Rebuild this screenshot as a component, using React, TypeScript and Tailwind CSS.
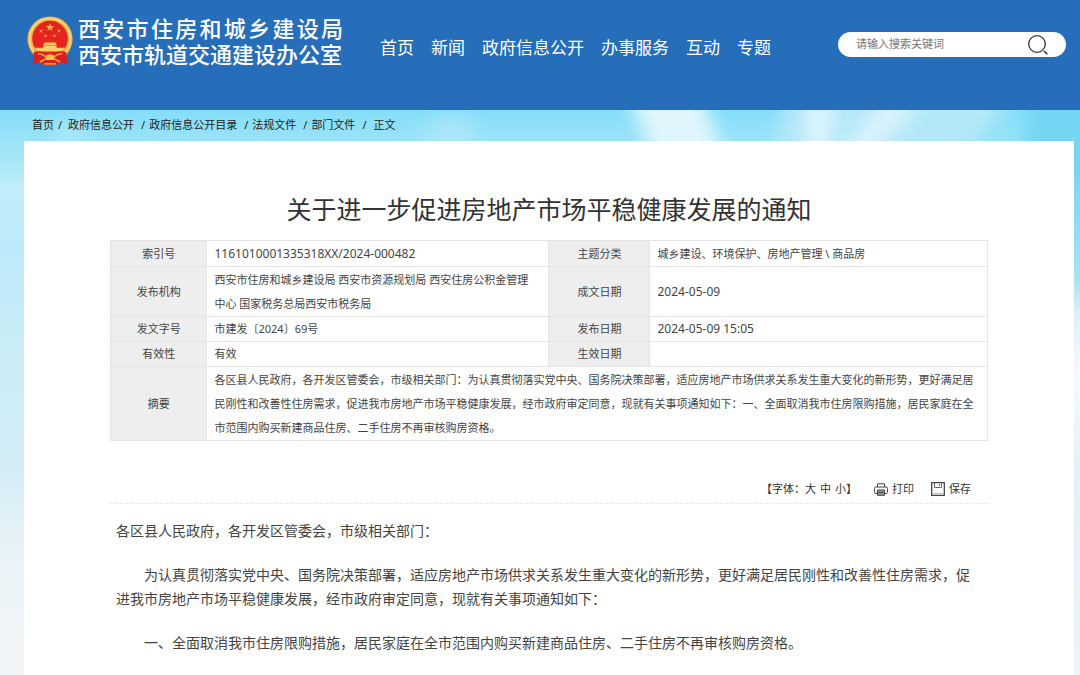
import React from 'react';

interface NoticeRow {
  label: string;
  value: string;
  numeric?: boolean;
  sideLabel: string;
  sideValue: string;
  sideNumeric?: boolean;
  height: string;
}

const navItems = ['首页', '新闻', '政府信息公开', '办事服务', '互动', '专题'];

const crumbs = ['首页', '政府信息公开', '政府信息公开目录', '法规文件', '部门文件'];

const rows: NoticeRow[] = [
  {
    label: '索引号',
    value: '1161010001335318XX/2024-000482',
    numeric: true,
    sideLabel: '主题分类',
    sideValue: '城乡建设、环境保护、房地产管理 \\ 商品房',
    height: 'h-[26px]',
  },
  {
    label: '发布机构',
    value: '西安市住房和城乡建设局 西安市资源规划局 西安住房公积金管理中心 国家税务总局西安市税务局',
    sideLabel: '成文日期',
    sideValue: '2024-05-09',
    sideNumeric: true,
    height: 'h-[50px]',
  },
  {
    label: '发文字号',
    value: '市建发〔2024〕69号',
    sideLabel: '发布日期',
    sideValue: '2024-05-09 15:05',
    sideNumeric: true,
    height: 'h-[25px]',
  },
  {
    label: '有效性',
    value: '有效',
    sideLabel: '生效日期',
    sideValue: '',
    height: 'h-[25px]',
  },
];

const STAR = 'M0-5 1.2-1.6 4.8-1.6 1.9.6 3 4 0 1.9-3 4-1.9.6-4.8-1.6-1.2-1.6Z';

const Emblem: React.FC = () => (
  <svg viewBox="0 0 46 50" className="h-[50px] w-[46px] shrink-0" aria-hidden="true">
    <circle cx="23" cy="23" r="22.6" fill="#f0b04a" />
    <circle cx="23" cy="23" r="20.4" fill="none" stroke="#fbd478" strokeWidth="2" />
    <circle cx="23" cy="22.5" r="17.8" fill="#e6231f" />
    <g fill="#f5a94a">
      <path d={STAR} transform="translate(23 11.5) scale(.9)" />
      <path d={STAR} transform="translate(14 15) scale(.42)" />
      <path d={STAR} transform="translate(32 15) scale(.42)" />
      <path d={STAR} transform="translate(18.5 19.8) scale(.42)" />
      <path d={STAR} transform="translate(27.5 19.8) scale(.42)" />
    </g>
    <g fill="#fbcd62">
      <path d="M17.5 26.5H28.5L30 29.5H16Z" />
      <path d="M16.5 29.8H29.5V31.8H38L35 35.5H11L8 31.8H16.5Z" />
    </g>
    <path d="M7 36Q14 34 18 37L23 39 28 37Q32 34 39 36L40.5 48 33 46.5 29 49H17L13 46.5 5.5 48Z" fill="#db1f1e" />
    <path d="M18 40Q23 36.5 28 40L27 44H19Z" fill="#f7c04a" />
    <g stroke="#f2a53d" strokeWidth="1.6" fill="none">
      <path d="M11 37.5Q16 38 19 41" />
      <path d="M35 37.5Q30 38 27 41" />
      <path d="M13 46 18.5 43" />
      <path d="M33 46 27.5 43" />
      <path d="M17 47.8H29" />
    </g>
  </svg>
);

const Sky: React.FC = () => (
  <svg
    viewBox="0 0 1080 565"
    preserveAspectRatio="none"
    className="absolute inset-0 h-full w-full"
    aria-hidden="true"
  >
    <defs>
      <linearGradient id="sky" x1="0" y1="0" x2="0" y2="1">
        <stop offset="0" stopColor="#85def8" />
        <stop offset=".06" stopColor="#9be4f8" />
        <stop offset=".14" stopColor="#c2edf9" />
        <stop offset=".25" stopColor="#bce9fa" />
        <stop offset=".42" stopColor="#c9edf6" />
        <stop offset=".62" stopColor="#d3ecf6" />
        <stop offset=".8" stopColor="#eaf3f8" />
        <stop offset="1" stopColor="#f2f5f7" />
      </linearGradient>
      <linearGradient id="skyRight" x1="0" y1="0" x2="0" y2="1">
        <stop offset="0" stopColor="#75d6f4" />
        <stop offset=".18" stopColor="#86dcf5" />
        <stop offset=".3" stopColor="#a6e4f6" />
        <stop offset=".36" stopColor="#daf1fa" />
        <stop offset=".47" stopColor="#f6fafc" />
        <stop offset=".64" stopColor="#e2f1f7" />
        <stop offset="1" stopColor="#eef3f6" />
      </linearGradient>
      <filter id="haze" x="-50%" y="-50%" width="200%" height="200%">
        <feGaussianBlur stdDeviation="9" />
      </filter>
    </defs>
    <rect width="1080" height="565" fill="url(#sky)" />
    <rect x="1060" width="20" height="565" fill="url(#skyRight)" />
    <g filter="url(#haze)">
      <path d="M790-20H1020L960 50H770Z" fill="#b4e8f8" />
      <path d="M625-20H700L725 50H655Z" fill="#e0f6fc" />
      <path d="M808-20H836L826 50H806Z" fill="#def5fc" />
      <path d="M890-20H930L870 50H835Z" fill="#d8f3fb" />
      <path d="M1035-20H1100V70H1010Z" fill="#75d6f4" />
      <path d="M430 10H470L480 40H420Z" fill="#abe7f8" />
      <path d="M60 15H90L80 40H50Z" fill="#a9e8f9" />
    </g>
  </svg>
);

const PrintIcon: React.FC = () => (
  <svg viewBox="0 0 14 13" className="h-[13px] w-[14px]" fill="none" stroke="#444" aria-hidden="true">
    <path d="M3.5 4V.8H10.5V4" />
    <path d="M3 10.5H1.8Q.6 10.5.6 9.3V5.2Q.6 4 1.8 4H12.2Q13.4 4 13.4 5.2V9.3Q13.4 10.5 12.2 10.5H11" />
    <path d="M3.5 7H10.5V12.3H3.5Z" fill="#999" />
    <path d="M4.5 9.5H9.5" />
  </svg>
);

const SaveIcon: React.FC = () => (
  <svg viewBox="0 0 14 14" className="h-[14px] w-[14px]" fill="none" stroke="#444" aria-hidden="true">
    <path d="M.7.7H13.3V13.3H.7Z" strokeWidth="1.3" />
    <path d="M3.5 1V5.5H10.5V1M8.5 2V4" stroke="#666" />
    <path d="M2.5 11.5H11.5" stroke="#bbb" />
  </svg>
);

const Header: React.FC = () => (
  <header className="flex h-[110px] items-start bg-[#266eb9] pr-[14px] pl-[27px] text-white">
    <div className="mt-[15px] flex items-center gap-[5px]">
      <Emblem />
      <div className="w-[265px] text-[22px] leading-[26px] font-medium whitespace-nowrap">
        <p className="[text-align-last:justify]">西安市住房和城乡建设局</p>
        <p>西安市轨道交通建设办公室</p>
      </div>
    </div>
    <nav className="mt-9 ml-[37px] flex gap-[17px] text-[17px] leading-6">
      {navItems.map(item => (
        <a key={item} href="#">{item}</a>
      ))}
    </nav>
    <form className="mt-8 ml-auto flex h-[25px] w-[228px] items-center rounded-full bg-white px-[18px]">
      <input
        type="text"
        aria-label="请输入搜索关键词"
        placeholder="请输入搜索关键词"
        className="min-w-0 flex-1 text-[11px] text-gray-700 outline-none placeholder:text-[#757575]"
      />
      <button type="button" aria-label="搜索">
        <svg viewBox="0 0 20 20" className="h-5 w-5" fill="none" stroke="#333" strokeWidth="1.3" aria-hidden="true">
          <circle cx="9" cy="9" r="8.3" />
          <path d="M16 16 19.3 19.3" strokeWidth="1.6" />
        </svg>
      </button>
    </form>
  </header>
);

const NoticeTable: React.FC = () => (
  <table className="w-full table-fixed border-collapse text-left text-[11px] leading-6 text-[#444] [&_td]:border [&_td]:border-[#e4e4e4] [&_td]:pr-3 [&_td]:pl-[7px] [&_th]:border [&_th]:border-[#e4e4e4] [&_th]:bg-[#eee] [&_th]:text-center [&_th]:font-normal">
    <colgroup>
      <col className="w-[11%]" />
      <col className="w-[39%]" />
      <col className="w-[101px]" />
      <col />
    </colgroup>
    <tbody>
      {rows.map(row => (
        <tr key={row.label} className={row.height}>
          <th scope="row">{row.label}</th>
          <td className={row.numeric ? 'text-xs' : ''}>{row.value}</td>
          <th scope="row">{row.sideLabel}</th>
          <td className={row.sideNumeric ? 'text-xs' : ''}>{row.sideValue}</td>
        </tr>
      ))}
      <tr className="h-[74px]">
        <th scope="row">摘要</th>
        <td colSpan={3}>
          各区县人民政府，各开发区管委会，市级相关部门：为认真贯彻落实党中央、国务院决策部署，适应房地产市场供求关系发生重大变化的新形势，更好满足居民刚性和改善性住房需求，促进我市房地产市场平稳健康发展，经市政府审定同意，现就有关事项通知如下：一、全面取消我市住房限购措施，居民家庭在全市范围内购买新建商品住房、二手住房不再审核购房资格。
        </td>
      </tr>
    </tbody>
  </table>
);

const App: React.FC = () => (
  <div lang="zh-CN" className="flex min-h-screen flex-col font-['Noto_Sans','Noto_Sans_CJK_SC',sans-serif]">
    <Header />
    <div className="relative flex flex-1 flex-col">
      <Sky />
      <nav aria-label="当前位置" className="relative flex h-[31px] items-center pl-8 text-[11px] text-[#222]">
        {crumbs.map((crumb, index) => (
          <React.Fragment key={crumb}>
            <a href="#">{crumb}</a>
            <span className={index === 0 ? 'mr-[6px] ml-1' : index === 4 ? 'mx-[7px]' : 'mr-1 ml-[7px]'}>/</span>
          </React.Fragment>
        ))}
        <span>正文</span>
      </nav>
      <main className="relative mr-[6px] ml-6 flex-1 bg-white px-[86px] pb-5">
        <h1 className="pt-[50px] pb-[13px] text-center text-[25px] leading-9 text-[#333]">
          关于进一步促进房地产市场平稳健康发展的通知
        </h1>
        <NoticeTable />
        <div className="mt-[34px] flex h-[29px] items-center justify-end gap-[17px] border-b border-dashed border-[#e8e8e8] pr-[17px] text-[11px] text-[#333]">
          <div className="flex items-center">
            <span>【字体：</span>
            <div className="flex gap-1">
              <button type="button">大</button>
              <button type="button">中</button>
              <button type="button">小</button>
            </div>
            <span>】</span>
          </div>
          <button type="button" className="flex items-center gap-1">
            <PrintIcon />
            打印
          </button>
          <button type="button" className="flex items-center gap-1">
            <SaveIcon />
            保存
          </button>
        </div>
        <article className="space-y-5 px-[6px] pt-[15px] text-sm leading-6 text-[#444]">
          <p>各区县人民政府，各开发区管委会，市级相关部门：</p>
          <p className="indent-[2em]">
            为认真贯彻落实党中央、国务院决策部署，适应房地产市场供求关系发生重大变化的新形势，更好满足居民刚性和改善性住房需求，促进我市房地产市场平稳健康发展，经市政府审定同意，现就有关事项通知如下：
          </p>
          <p className="indent-[2em]">
            一、全面取消我市住房限购措施，居民家庭在全市范围内购买新建商品住房、二手住房不再审核购房资格。
          </p>
        </article>
      </main>
    </div>
  </div>
);

export default App;
